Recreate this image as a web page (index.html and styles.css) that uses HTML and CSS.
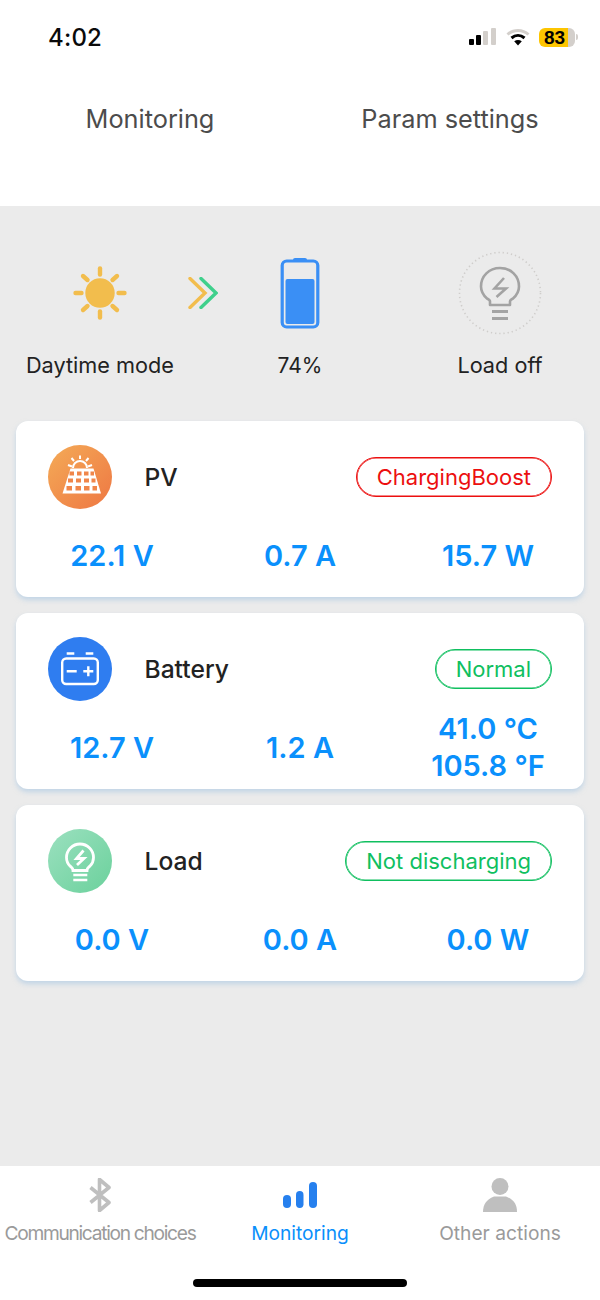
FILE: index.html
```html
<!DOCTYPE html>
<html lang="en">
<head>
<meta charset="utf-8">
<title>Monitoring</title>
<link rel="stylesheet" href="styles.css">
</head>
<body>
<div class="app">
  <header class="header">
    <div class="status">
      <span class="time">4:02</span>
      <div class="status-icons">
        <svg class="signal" width="28" height="18" viewBox="0 0 28 18"><rect x="0" y="11" width="5" height="6" rx="1" fill="#000"/><rect x="7" y="7" width="5" height="10" rx="1" fill="#000"/><rect x="14" y="3" width="5" height="14" rx="1" fill="#d3cfcb"/><rect x="22" y="0" width="5" height="17" rx="1" fill="#d3cfcb"/></svg>
        <svg class="wifi" width="24" height="18" viewBox="0 0 24 18"><path d="M1.5 6.5C7.5 1 16.500 1 22.500 6.500" fill="none" stroke="#d3cfcb" stroke-width="3"/><path d="M5.500 10C9.500 6.500 14.500 6.500 18.500 10" fill="none" stroke="#000" stroke-width="3"/><path d="M12 17.500L8.200 13.200C10.500 11.500 13.500 11.500 15.800 13.200Z" fill="#000"/></svg>
        <div class="batt"><div class="batt-body"><span class="batt-num">83</span></div><span class="batt-nub"></span></div>
      </div>
    </div>
    <nav class="top-tabs">
      <span class="top-tab">Monitoring</span>
      <span class="top-tab">Param settings</span>
    </nav>
  </header>

  <main class="main">
    <section class="hero">
      <svg class="hero-icon col-1" width="60" height="60" viewBox="0 0 60 60"><circle cx="30" cy="30" r="14.700" fill="#f2bd4d"/><g stroke="#f2bd4d" stroke-width="4.400" stroke-linecap="round"><path d="M30 5.500V11.500"/><path d="M30 48.500V54.500"/><path d="M5.500 30H11.500"/><path d="M48.500 30H54.500"/><path d="M13 13L17.500 17"/><path d="M47 13L42.500 17"/><path d="M13 47L17.500 43"/><path d="M47 47L42.500 43"/></g></svg>
      <svg class="flow" width="30" height="32" viewBox="0 0 30 32"><path d="M13 1.500L28 16L13 30.500" fill="none" stroke="#3fd08c" stroke-width="3.400" stroke-linecap="round"/><path d="M2 1.500L17 16L2 30.500" fill="none" stroke="#f2bd4d" stroke-width="3.400" stroke-linecap="round"/></svg>
      <svg class="hero-icon col-2" width="40" height="72" viewBox="0 0 40 72"><path d="M13 2.500Q13 1 15 1H25Q27 1 27 2.500V4H13Z" fill="#3a8ff5"/><rect x="2.200" y="4" width="35.600" height="66" rx="4.500" fill="none" stroke="#3a8ff5" stroke-width="3.200"/><rect x="5.500" y="22" width="29" height="45" rx="2" fill="#3a8ff5"/></svg>
      <svg class="hero-icon col-3" width="84" height="84" viewBox="0 0 84 84"><circle cx="42" cy="42" r="40.500" fill="none" stroke="#cfcdcb" stroke-width="1.600" stroke-dasharray="1.300 2.900"/><path d="M32 54V50.500C32 49 31 48.500 29 47.500C25 44 23 40 23 35.500C23 25 31 17 42 17C53 17 61 25 61 35.500C61 40 59 44 55 47.500C53 48.500 52 49 52 50.500V54Z" fill="none" stroke="#a3a3a3" stroke-width="2.600" stroke-linejoin="round"/><path d="M46 27L36.500 37.500H48L38.500 46" fill="none" stroke="#a3a3a3" stroke-width="2.600"/><path d="M34 60.500H50M34 67.500H50" stroke="#a3a3a3" stroke-width="3"/></svg>
      <span class="hero-label">Daytime mode</span>
      <span class="hero-label pct">74%</span>
      <span class="hero-label">Load off</span>
    </section>

    <section class="card">
      <div class="card-head">
        <svg class="card-icon" width="64" height="64" viewBox="0 0 64 64"><defs><linearGradient id="gp" x1="0" y1="0" x2="1" y2="1"><stop offset="0" stop-color="#f4ab57"/><stop offset="1" stop-color="#ee7743"/></linearGradient></defs><circle cx="32" cy="32" r="32" fill="url(#gp)"/><path d="M25 23A7 7 0 0 1 39 23" fill="none" stroke="#fff" stroke-width="2"/><g stroke="#fff" stroke-width="2"><path d="M32 10.500V14"/><path d="M23.500 13L26 16"/><path d="M40.500 13L38 16"/><path d="M20 20L24 21.500"/><path d="M44 20L40 21.500"/></g><path d="M22.500 23.500H45.500L53 48.500H14.500Z" fill="#fff"/><g fill="#f0864a"><rect x="21.500" y="26.500" width="4.500" height="4"/><rect x="29" y="26.500" width="4.500" height="4"/><rect x="36" y="26.500" width="4.500" height="4"/><rect x="42.500" y="26.500" width="3.500" height="4"/><rect x="20" y="33.500" width="5" height="4"/><rect x="28" y="33.500" width="5" height="4"/><rect x="36" y="33.500" width="5" height="4"/><rect x="43.500" y="33.500" width="4" height="4"/><rect x="18.500" y="41" width="5.500" height="4.500"/><rect x="27.500" y="41" width="5.500" height="4.500"/><rect x="36" y="41" width="5.500" height="4.500"/><rect x="44.500" y="41" width="4.500" height="4.500"/></g></svg>
        <span class="card-title">PV</span>
        <span class="badge badge-red">ChargingBoost</span>
      </div>
      <div class="values">
        <span class="value">22.1 V</span>
        <span class="value">0.7 A</span>
        <span class="value">15.7 W</span>
      </div>
    </section>

    <section class="card">
      <div class="card-head">
        <svg class="card-icon" width="64" height="64" viewBox="0 0 64 64"><circle cx="32" cy="32" r="32" fill="#2f7df0"/><rect x="14.200" y="21.500" width="35.600" height="25.500" rx="4" fill="none" stroke="#fff" stroke-width="2.400"/><path d="M18.700 16.500H26.300M37.700 16.500H45.300M18.700 34.300H28.700M35.300 34.300H45.300M40.300 29.300V39.300" stroke="#fff" stroke-width="2.400"/></svg>
        <span class="card-title">Battery</span>
        <span class="badge badge-green">Normal</span>
      </div>
      <div class="values">
        <span class="value">12.7 V</span>
        <span class="value">1.2 A</span>
        <span class="value">41.0 °C<br>105.8 °F</span>
      </div>
    </section>

    <section class="card">
      <div class="card-head">
        <svg class="card-icon" width="64" height="64" viewBox="0 0 64 64"><defs><linearGradient id="gl" x1="0" y1="0" x2="1" y2="1"><stop offset="0" stop-color="#9be0bf"/><stop offset="1" stop-color="#6bd19c"/></linearGradient></defs><circle cx="32" cy="32" r="32" fill="url(#gl)"/><path d="M25 41.500C25 39 23.500 38.500 22 37C19.500 34.500 18.500 32 18.500 28.500C18.500 21 24.500 15 32 15C39.500 15 45.500 21 45.500 28.500C45.500 32 44.500 34.500 42 37C40.500 38.500 39 39 39 41.500Z" fill="none" stroke="#fff" stroke-width="2.800"/><path d="M35.500 21.500L28.500 29.500H36L29 36" fill="none" stroke="#fff" stroke-width="2.800"/><path d="M25.300 46H39.300M25.300 51H39.300" stroke="#fff" stroke-width="2.500"/></svg>
        <span class="card-title">Load</span>
        <span class="badge badge-green">Not discharging</span>
      </div>
      <div class="values">
        <span class="value">0.0 V</span>
        <span class="value">0.0 A</span>
        <span class="value">0.0 W</span>
      </div>
    </section>
  </main>

  <footer class="tabbar">
    <div class="tabs">
      <div class="tab">
        <svg width="24" height="34" viewBox="0 0 24 34"><path d="M2.500 9.500L21 24.500L11.500 32.500V1.500L21 9.500L2.500 24.500" fill="none" stroke="#bfbfbf" stroke-width="3.600" stroke-linejoin="round"/></svg>
        <span class="tab-label tab-tight">Communication choices</span>
      </div>
      <div class="tab tab-active">
        <svg width="36" height="34" viewBox="0 0 36 34"><rect x="1" y="17" width="8" height="13" rx="4" fill="#2680ee"/><rect x="14" y="13" width="7.500" height="17" rx="3.700" fill="#2680ee"/><rect x="27" y="4" width="8" height="26" rx="4" fill="#2680ee"/></svg>
        <span class="tab-label">Monitoring</span>
      </div>
      <div class="tab">
        <svg width="36" height="34" viewBox="0 0 36 34"><circle cx="18" cy="8.500" r="8.500" fill="#bfbfbf"/><path d="M1 34C1 27 4 21.500 12 18.500H24C32 21.500 35 27 35 34Z" fill="#bfbfbf"/></svg>
        <span class="tab-label">Other actions</span>
      </div>
    </div>
    <div class="home-bar"></div>
  </footer>
</div>
</body>
</html>
```
FILE: styles.css
```css
* { box-sizing: border-box; }
html, body { margin: 0; padding: 0; }
body { font-family: Inter, "Liberation Sans", sans-serif; background: #fff; }
.app { width: 600px; height: 1300px; display: flex; flex-direction: column; overflow: hidden; }

.header { height: 206px; background: #fff; display: flex; flex-direction: column; }
.status { height: 74px; padding: 0 22px 0 48px; display: flex; align-items: center; justify-content: space-between; }
.time { font-size: 24px; font-weight: 500; color: #0a0a0a; letter-spacing: 0.2px; }
.status-icons { display: flex; align-items: center; gap: 9px; }
.signal, .wifi { display: block; }
.batt { display: flex; align-items: center; gap: 1px; }
.batt-body { width: 36px; height: 19px; border-radius: 6px; background: linear-gradient(90deg, #fdc500 0 80%, #d3cfcb 80% 100%); display: flex; align-items: center; padding-left: 5px; }
.batt-num { font-family: "Liberation Sans", sans-serif; font-size: 19px; font-weight: 700; color: #000; line-height: 19px; }
.batt-nub { width: 2px; height: 6px; background: #d3cfcb; border-radius: 0 2px 2px 0; }
.top-tabs { display: grid; grid-template-columns: 1fr 1fr; padding-top: 27px; }
.top-tab { text-align: center; font-size: 25.300px; line-height: 36px; color: #4c4c4c; }

.main { flex: 1; background: #ebebeb; padding: 45px 16px 0; display: flex; flex-direction: column; gap: 16px; }
.hero { display: grid; grid-template-columns: repeat(3, 200px); grid-template-rows: 84px auto; margin: 0 -16px 24px; align-items: center; justify-items: center; }
.hero-icon { grid-row: 1; display: block; }
.col-1 { grid-column: 1; }
.col-2 { grid-column: 2; }
.col-3 { grid-column: 3; }
.flow { grid-row: 1; grid-column: 1; justify-self: end; margin-right: -18px; }
.hero-label { grid-row: 2; font-size: 21.700px; line-height: 30px; color: #222; margin-top: 13px; }
.pct { margin-top: 16px; font-size: 21px; }

.card { height: 176px; background: #fff; border-radius: 12px; box-shadow: 0 3px 5px rgba(160, 195, 225, 0.55); padding: 24px 2px 4px; display: flex; flex-direction: column; }
.card-head { display: flex; align-items: center; height: 64px; padding: 0 30px; }
.card-icon { flex: none; display: block; }
.card-title { margin-left: 32.500px; flex: 1; font-size: 24.600px; font-weight: 500; color: #222; }
.badge { height: 40px; border-radius: 20px; padding: 0 20px; font-size: 22px; line-height: 38px; border: 1px solid; }
.badge-red { color: #ec0f0f; border-color: #ec0f0f; box-shadow: inset 0 0 0 0.600px #ec0f0f; }
.badge-green { color: #0fbf5f; border-color: #0fbf5f; box-shadow: inset 0 0 0 0.600px #0fbf5f; }
.values { flex: 1; margin-top: 8px; display: grid; grid-template-columns: repeat(3, 1fr); align-items: center; justify-items: center; }
.value { text-align: center; font-size: 29px; line-height: 37px; font-weight: 600; color: #0a90fc; }

.tabbar { height: 134px; background: #fff; display: flex; flex-direction: column; }
.tabs { display: grid; grid-template-columns: repeat(3, 1fr); padding-top: 12px; }
.tab { display: flex; flex-direction: column; align-items: center; }
.tab svg { display: block; }
.tab-label { margin-top: 6px; font-size: 19.200px; line-height: 30px; color: #9a9a9a; white-space: nowrap; }
.tab-active .tab-label { color: #0a8ffb; }
.tab-tight { letter-spacing: -1.300px; }
.home-bar { width: 214px; height: 8px; border-radius: 4px; background: #000; margin: 31px auto 0; }
```
